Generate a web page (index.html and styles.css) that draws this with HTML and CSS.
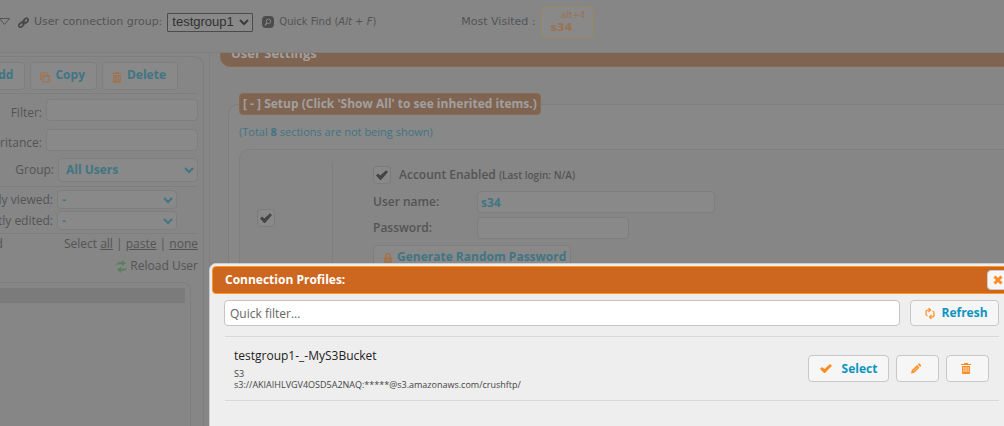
FILE: index.html
```html
<!DOCTYPE html>
<html lang="en">
<head>
<meta charset="utf-8">
<title>User Manager</title>
<link rel="stylesheet" href="styles.css">
</head>
<body>
<svg class="defs" aria-hidden="true">
  <symbol id="trash" viewBox="0 0 10 11"><path fill="currentColor" fill-rule="evenodd" d="M0 2V1h3V0h4v1h3v1zM1 3h8v7q0 1-1 1H2q-1 0-1-1zM2.500 4v5h.8V4zM4.600 4v5h.8V4zM6.700 4v5h.8V4z"/></symbol>
  <symbol id="chevron" viewBox="0 0 10 7"><path d="M1 1l4 4 4-4" fill="none" stroke="currentColor" stroke-width="2"/></symbol>
</svg>
<header class="topbar">
  <svg class="tri" viewBox="0 0 10 8"><path d="M0 .5h9.500L4.500 6.500 0 1" fill="none" stroke="currentColor"/></svg>
  <svg class="link" viewBox="0 0 11 11" fill="none" stroke="currentColor" stroke-width="1.800"><rect x="5" y="2" width="5.500" height="3.500" rx="1.700" transform="rotate(-45 7.750 3.750)"/><rect x=".5" y="6" width="5.500" height="3.500" rx="1.700" transform="rotate(-45 3.250 7.750)"/><path d="M4.200 6.800l2.600-2.600"/></svg>
  <label for="conn">User connection group:</label>
  <span class="pick conn"><select id="conn"><option>testgroup1</option></select><svg class="chev"><use href="#chevron"/></svg></span>
  <svg class="find" viewBox="0 0 12 12"><rect width="12" height="12" rx="4" fill="currentColor"/><circle cx="6.500" cy="5.300" r="2.200" fill="none" stroke="#868686"/><path d="M5 7L3 9.300" stroke="#868686" stroke-width="1.400"/></svg>
  <span class="quick">Quick Find (<em>Alt + F</em>)</span>
  <span class="most">Most Visited :</span>
  <a class="visit" href="#"><small>alt+4</small><b>s34</b></a>
</header>
<div class="work">
  <aside class="side">
    <div class="panel">
      <div class="row tools">
        <button class="btn">Add</button>
        <button class="btn"><svg class="ico" viewBox="0 0 10 11" fill="none" stroke="currentColor" stroke-width="1.200"><path d="M2 7.500H.7V1h6.500v1.500"/><rect x="3" y="3.500" width="6.300" height="6.500"/><path d="M3 4.500h6"/></svg>Copy</button>
        <button class="btn"><svg class="ico"><use href="#trash"/></svg>Delete</button>
      </div>
      <div class="row field"><label for="filter">Filter:</label><input id="filter" class="box"></div>
      <div class="row field"><label for="inh">Inheritance:</label><input id="inh" class="box"></div>
      <div class="row group"><label for="grp">Group:</label><span class="pick big"><select id="grp"><option>All Users</option></select><svg class="chev"><use href="#chevron"/></svg></span></div>
      <div class="recent">
        <div class="row"><label for="rv">Recently viewed:</label><span class="pick"><select id="rv"><option>-</option></select><svg class="chev"><use href="#chevron"/></svg></span></div>
        <div class="row"><label for="re">Recently edited:</label><span class="pick"><select id="re"><option>-</option></select><svg class="chev"><use href="#chevron"/></svg></span></div>
      </div>
      <div class="row choose"><span>Selected</span><span>Select <a href="#">all</a> | <a href="#">paste</a> | <a href="#">none</a></span></div>
      <div class="row reload"><svg viewBox="0 0 11 13" fill="currentColor"><path d="M0 5q1-3 5-3h1V0l4 3.200-4 3V4.500Q3 4 0 5zM11 8q-1 3-5 3H5v2L1 9.800l4-3v1.700q3 .5 6-.5z"/></svg><span>Reload User</span></div>
      <div class="list"><div class="bar"></div></div>
    </div>
  </aside>
  <main class="main">
    <h1 class="title">User Settings</h1>
    <fieldset class="setup">
      <legend>[ - ] Setup (Click 'Show All' to see inherited items.)</legend>
      <a class="total" href="#">(Total <b>8</b> sections are not being shown)</a>
      <div class="card">
        <div class="gate"><input type="checkbox" class="tick" aria-label="Use section" checked></div>
        <div class="form">
          <label class="enabled"><input type="checkbox" class="tick" checked><span>Account Enabled <small>(Last login: N/A)</small></span></label>
          <div class="pair"><label for="un">User name:</label><input id="un" class="box name" value="s34"></div>
          <div class="pair"><label for="pw">Password:</label><input id="pw" class="box pass" type="password"></div>
          <button class="btn gen"><svg class="lock" viewBox="0 0 8 10"><path fill="currentColor" fill-rule="evenodd" d="M0 4h1V3q0-3 3-3t3 3v1h1v5q0 1-1 1H1q-1 0-1-1zM2.500 4h3V3q0-1.500-1.500-1.500T2.500 3zM3.500 6v2h1V6z"/></svg>Generate Random Password</button>
        </div>
      </div>
    </fieldset>
  </main>
</div>
<section class="modal" role="dialog" aria-label="Connection Profiles">
  <header class="head"><h2>Connection Profiles:</h2><button class="close" aria-label="Close"><svg viewBox="0 0 10 10"><path d="M1.500 1.500l7 7M8.500 1.500l-7 7" stroke="currentColor" stroke-width="3"/></svg></button></header>
  <div class="search"><input aria-label="Quick filter" placeholder="Quick filter..."><button class="act"><svg viewBox="0 0 10 11" fill="none" stroke="currentColor" stroke-width="1.200"><path d="M4.500 2H3Q1 2 1 4v2q0 1.500 1.500 2M3.500 0l2 2-2 2M5.500 9H7q2 0 2-2V5q0-1.500-1.500-2M6.500 7l-2 2 2 2"/></svg>Refresh</button></div>
  <article class="item">
    <div class="info"><h3>testgroup1-_-MyS3Bucket</h3><p>S3</p><p>s3://AKIAIHLVGV4OSD5A2NAQ:*****@s3.amazonaws.com/crushftp/</p></div>
    <button class="act sel"><svg viewBox="0 0 12 10"><path fill="currentColor" d="M0 5.500l2-2 2.500 2L10 .5 12 2.300 5 9.500H4z"/></svg>Select</button>
    <button class="act sq" aria-label="Edit"><svg viewBox="0 0 10 10"><path fill="currentColor" d="M0 10l.8-3.300L6 1.500 8.500 4 3.300 9.200zM6.700.9L7.500 0h1L10 1.500v1l-.8.800z"/><path d="M2 8l4.500-4.500" stroke="#f6f6f6" stroke-width=".6"/></svg></button>
    <button class="act sq" aria-label="Delete"><svg><use href="#trash"/></svg></button>
  </article>
</section>
</body>
</html>
```
FILE: styles.css
```css
* { box-sizing: border-box; }
html, body { height: 100%; }
body {
  margin: 0;
  overflow: hidden;
  display: flex;
  flex-direction: column;
  position: relative;
  background: #868686;
  color: #545454;
  font: 12px/16px "Open Sans", "Noto Sans", sans-serif;
}
button, input, select { font: inherit; color: inherit; margin: 0; }
svg { display: block; flex: none; }
.defs { position: absolute; width: 0; height: 0; }

.topbar {
  flex: none;
  display: flex;
  align-items: center;
  height: 53px;
  padding-bottom: 8px;
  border-bottom: 1px solid #7f7f7f;
  font: 11px/16px "DejaVu Sans", sans-serif;
  white-space: nowrap;
}
.tri { width: 10px; height: 8px; margin-right: 8px; }
.link { width: 11px; height: 11px; margin-right: 5px; color: #4a4a4a; }
.pick { position: relative; display: block; width: 120px; height: 19px; flex: none; }
.pick select {
  appearance: none;
  display: block;
  width: 100%;
  height: 100%;
  padding: 0 4px;
  border: 1px solid #7e7e7e;
  border-radius: 4px;
  background: #898989;
  color: #417584;
  font-weight: 700;
}
.chev { position: absolute; right: 4px; top: 50%; width: 10px; height: 7px; margin-top: -3px; color: #417584; }
.conn { width: 86px; margin: 0 9px 0 5px; }
.conn select {
  border-color: #4c4c4c;
  border-radius: 1px;
  color: #303030;
  font: 13px/16px "Liberation Sans", sans-serif;
}
.conn .chev { color: #3c3c3c; }
.find { width: 12px; height: 12px; margin-right: 5px; color: #4c4c4c; }
.quick { font-size: 10px; }
.most { margin: 0 6px 0 85px; }
.visit {
  display: flex;
  flex-direction: column;
  width: 52px;
  height: 31px;
  padding: 1px 7px 0 8px;
  border: 1px solid #9a8860;
  border-radius: 3px;
  background: #898989;
  color: #9a7150;
  text-decoration: none;
  line-height: 13px;
}
.visit small { font-size: 9px; line-height: 12px; text-align: right; }

.work { flex: 1; min-height: 0; display: flex; }
.side {
  flex: none;
  width: 210px;
  padding: 3px 5px 0 0;
  border-right: 1px solid #7f7f7f;
  overflow: hidden;
}
.panel {
  height: 100%;
  padding: 5px 5px 0 0;
  border: solid #7e7e7e;
  border-width: 1px 1px 0 0;
  border-top-right-radius: 10px;
  white-space: nowrap;
}
.row { display: flex; justify-content: flex-end; align-items: center; gap: 4px; }
.tools { gap: 5px; padding: 0 20px 3px 0; margin-bottom: 5px; border-bottom: 1px solid #7e7e7e; }
.btn {
  display: flex;
  align-items: center;
  gap: 5px;
  height: 28px;
  padding: 0 12px 2px 9px;
  border: 1px solid #7e7e7e;
  border-radius: 4px;
  background: #898989;
  color: #417584;
  font-weight: 700;
}
.tools .btn { padding-right: 11px; }
.ico { width: 10px; height: 11px; margin-top: 4px; color: #a0744f; }
.box {
  height: 22px;
  padding: 0 3px;
  border: 1px solid #7e7e7e;
  border-radius: 4px;
  background: #898989;
}
.field { margin-bottom: 8px; }
.field label { padding-top: 6px; }
.field .box { width: 152px; flex: none; }
.group { margin-top: -1px; padding-bottom: 4px; border-bottom: 1px solid #7e7e7e; }
.big { width: 140px; height: 24px; }
.big select { padding: 0 7px; }
.recent { display: flex; flex-direction: column; gap: 2px; padding: 3px 21px 3px 0; border-bottom: 1px solid #7e7e7e; }
.choose { gap: 61px; margin-top: 2px; }
.choose a { color: inherit; }
.reload { margin-top: 6px; gap: 3px; }
.reload svg { width: 11px; height: 13px; color: #5a7f5d; }
.list {
  margin: 8px 7px 0 -9px;
  height: 200px;
  padding: 5px;
  border: 1px solid #7e7e7e;
  border-radius: 8px;
}
.bar { height: 15px; background: #7b7b7b; }

.main { flex: 1; min-width: 0; padding-left: 10px; overflow: hidden; }
.title {
  margin: -14px -12px 26px 0;
  padding: 5px 10px;
  border: 1px solid #8a6a50;
  border-radius: 10px;
  background: #806452;
  color: #a0a0a0;
  font-size: 13px;
  line-height: 16px;
}
.setup {
  margin: 0 -12px 0 8px;
  padding: 9px 0 0 10px;
  border: 1px solid #7e7e7e;
  border-radius: 10px;
  background: #888;
  min-width: 0;
}
legend {
  padding: 2px 3px;
  border: 1px solid #8a6a50;
  border-radius: 4px;
  background: #806452;
  color: #a0a0a0;
  font-weight: 700;
}
.total { display: block; color: #417584; font-size: 11px; text-decoration: none; }
.card {
  display: flex;
  height: 300px;
  margin-top: 9px;
  padding-top: 12px;
  border: 1px solid #7f7f7f;
  border-radius: 10px;
  background: #868686;
}
.gate { width: 93px; padding: 47px 0 0 17px; border-right: 1px solid #7f7f7f; }
.form { flex: 1; padding: 4px 0 0 40px; font-weight: 600; }
.tick {
  appearance: none;
  display: grid;
  place-items: center;
  flex: none;
  width: 18px;
  height: 18px;
  border: 1px solid #7b7b7b;
  border-radius: 4px;
  background: #898989;
}
.tick:checked::before {
  content: "";
  width: 12px;
  height: 10px;
  background: #444;
  clip-path: polygon(0 55%, 16% 35%, 36% 56%, 84% 2%, 100% 20%, 42% 100%, 34% 100%);
}
.enabled { display: flex; gap: 8px; margin-bottom: 7px; align-items: center; }
.enabled small { font-size: 10px; }
.pair { display: flex; align-items: center; margin-bottom: 4px; }
.pair label { width: 104px; }
.name { width: 238px; color: #417584; font-weight: 700; }
.pass { width: 152px; }
.gen { margin-top: 6px; padding: 0 4px 4px 10px; }
.lock { width: 8px; height: 10px; margin-top: 2px; color: #a0744f; }

.modal {
  position: absolute;
  left: 209px;
  right: -12px;
  top: 263px;
  bottom: -12px;
  padding: 2px;
  border: 1px solid #ccc;
  border-radius: 7px;
  background: #eee;
  color: #444;
}
.head {
  display: flex;
  align-items: center;
  justify-content: space-between;
  height: 28px;
  padding: 0 4px 0 12px;
  border: 1px solid #ff9420;
  border-radius: 4px;
  background: #cd6720;
}
.head h2 { margin: 0; color: #fff; font-size: 12px; }
.close {
  display: grid;
  place-items: center;
  width: 21px;
  height: 20px;
  padding: 0;
  border: 1px solid #ccc;
  border-radius: 4px;
  background: #f6f6f6;
  color: #ff8c22;
}
.close svg { width: 10px; height: 10px; }
.search { display: flex; gap: 10px; padding: 6px 14px 10px 0; margin-left: 12px; }
.search input {
  flex: 1;
  min-width: 0;
  height: 26px;
  padding: 0 5px;
  border: 1px solid #c4c4c4;
  border-radius: 4px;
  background: #fff;
}
.search input::placeholder { color: #666; opacity: 1; }
.act {
  display: flex;
  align-items: center;
  justify-content: center;
  gap: 6px;
  width: 89px;
  height: 26px;
  padding: 0;
  border: 1px solid #c8c8c8;
  border-radius: 4px;
  background: #f6f6f6;
  color: #0c94c0;
  font-weight: 700;
}
.act svg { width: 10px; height: 11px; color: #ff8c22; }
.search .act { padding-left: 4px; }
.item {
  display: flex;
  align-items: center;
  gap: 7px;
  height: 65px;
  margin: 0 14px 0 13px;
  padding: 0 10px 0 9px;
  border: solid #d8d8d8;
  border-width: 1px 0;
}
.info { flex: 1; min-width: 0; }
.info h3 { margin: 0 0 4px; color: #222; font-size: 12px; font-weight: 400; }
.info p { margin: 0; font-size: 9px; line-height: 11px; }
.sel { width: 81px; gap: 10px; }
.sel svg { width: 12px; }
.sq { width: 43px; padding-right: 4px; }
.item .act { height: 27px; }
```
